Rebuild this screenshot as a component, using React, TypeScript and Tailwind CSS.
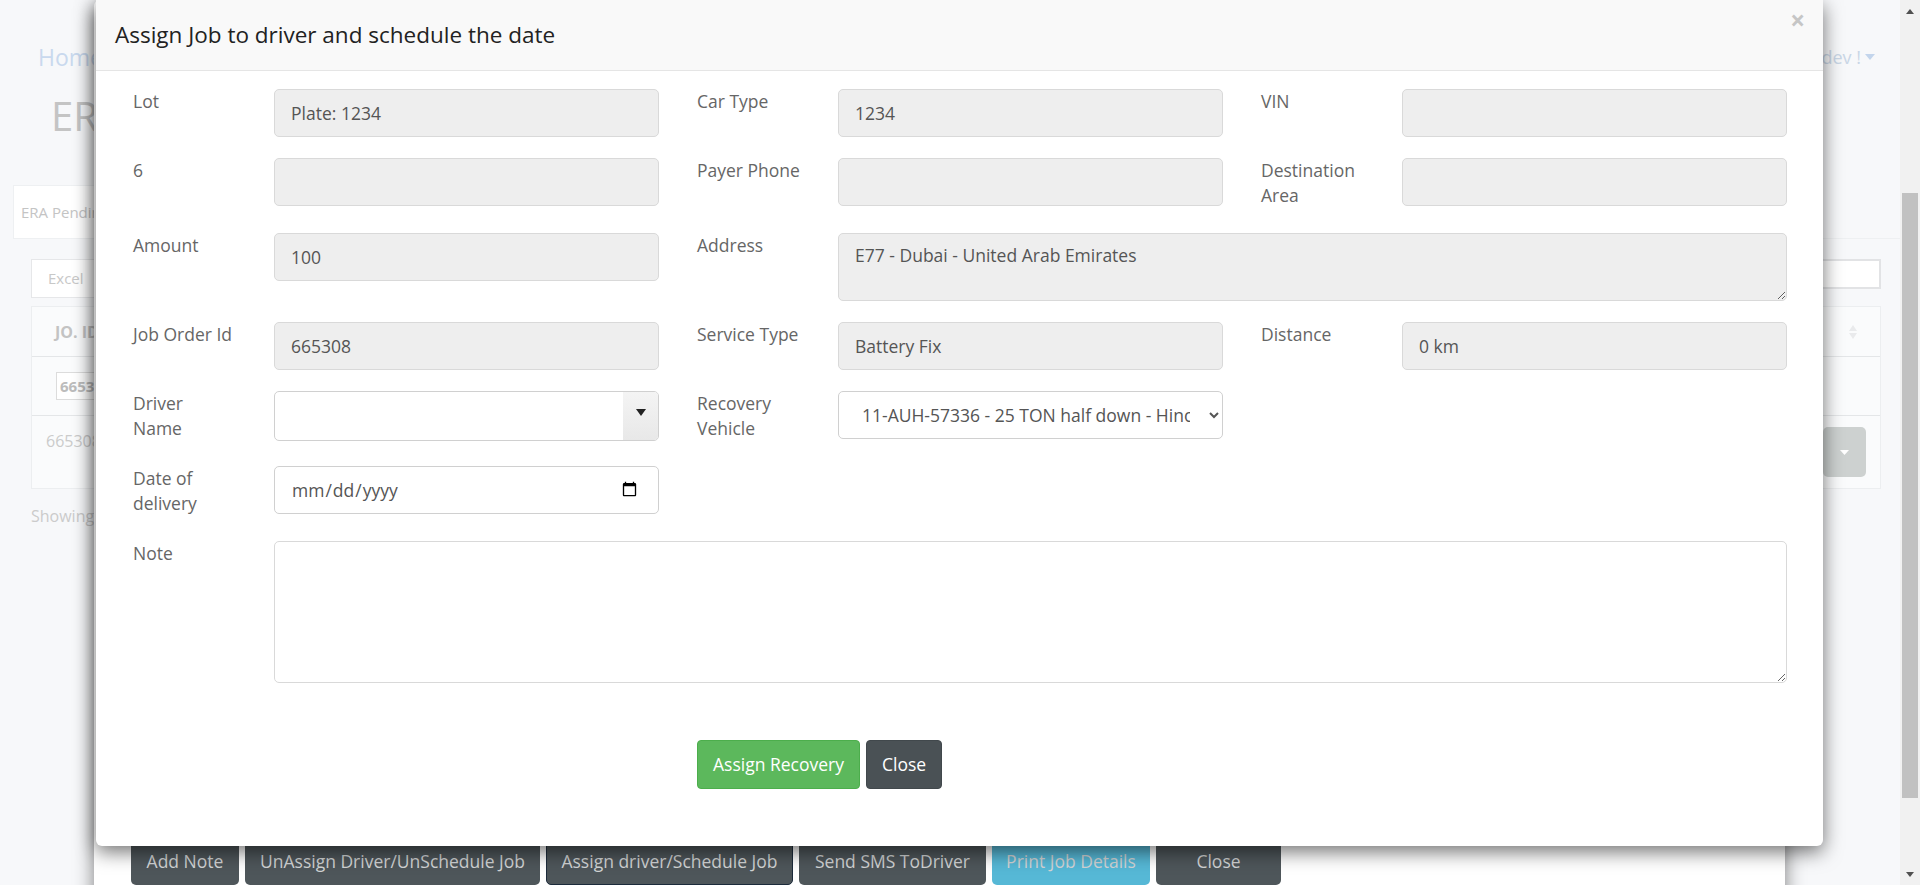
import React from 'react';

const labelCls = 'w-[141px] shrink-0 pr-[30px] pb-1 whitespace-pre-line text-[17.5px] leading-[25px] text-[#666]';
const readCls =
  'block h-[48px] w-full min-w-0 rounded-[5px] border border-[#d9d9d9] bg-[#eee] px-[16px] text-[17.5px] text-[#555] outline-none';

function Field({ label, children, span }: { label: string; children: React.ReactNode; span?: string }) {
  return (
    <div className={`flex items-start ${span ?? ''}`}>
      <div className={labelCls}>{label}</div>
      <div className="min-w-0 flex-1">{children}</div>
    </div>
  );
}

function ReadInput({ value }: { value?: string }) {
  return <input readOnly value={value ?? ''} className={readCls} />;
}

function DriverSelect() {
  return (
    <div className="flex h-[50px] w-full overflow-hidden rounded-[5px] border border-[#d0d0d0] bg-white">
      <div className="flex-1" />
      <div className="flex w-[35px] items-center justify-center bg-gradient-to-b from-[#f4f4f4] to-[#e8e8e8]">
        <svg width="10" height="7" viewBox="0 0 10 7" className="-mt-[8px]">
          <path d="M0 0 H10 L5 7 Z" fill="#222" />
        </svg>
      </div>
    </div>
  );
}

function FrontModal() {
  return (
    <div className="absolute left-[96px] top-0 w-[1727px] rounded-b-[6px] bg-white shadow-[0_6px_19px_rgba(0,0,0,0.55)]">
      <div className="relative flex h-[71px] items-center border-b border-[#e5e5e5] bg-[#f9f9f9] pl-[19px]">
        <h4 className="text-[22.5px] leading-[30px] text-[#222]">Assign Job to driver and schedule the date</h4>
        <button className="absolute right-[18px] top-[5px] text-[26px] font-bold leading-[30px] text-[#c6c6c6]">×</button>
      </div>

      <div className="grid grid-cols-3 gap-x-[38px] gap-y-[21px] pl-[37px] pr-[36px] pt-[18px]">
        <Field label="Lot">
          <ReadInput value="Plate: 1234" />
        </Field>
        <Field label="Car Type">
          <ReadInput value="1234" />
        </Field>
        <Field label="VIN">
          <ReadInput />
        </Field>

        <Field label="6">
          <ReadInput />
        </Field>
        <Field label="Payer Phone">
          <ReadInput />
        </Field>
        <Field label={'Destination\nArea'}>
          <ReadInput />
        </Field>

        <Field label="Amount">
          <ReadInput value="100" />
        </Field>
        <Field label="Address" span="col-span-2">
          <textarea
            readOnly
            value="E77 - Dubai - United Arab Emirates"
            className="block h-[68px] w-full rounded-[5px] border border-[#d9d9d9] bg-[#eee] px-[16px] pt-[9px] text-[17.5px] leading-[25px] text-[#555] outline-none"
          />
        </Field>

        <Field label="Job Order Id">
          <ReadInput value="665308" />
        </Field>
        <Field label="Service Type">
          <ReadInput value="Battery Fix" />
        </Field>
        <Field label="Distance">
          <ReadInput value="0 km" />
        </Field>

        <Field label={'Driver\nName'}>
          <DriverSelect />
        </Field>
        <Field label={'Recovery\nVehicle'}>
          <select className="block h-[48px] w-full rounded-[5px] border border-[#d0d0d0] bg-white pl-[19px] pr-[16px] text-[17.5px] text-[#555] outline-none">
            <option>11-AUH-57336 - 25 TON half down - Hino</option>
          </select>
        </Field>
        <div />

        <Field label={'Date of\ndelivery'}>
          <input
            type="date"
            className="block h-[48px] w-full rounded-[5px] border border-[#d0d0d0] bg-white pl-[16px] pr-[18px] text-[17.5px] text-[#555] outline-none"
          />
        </Field>
        <div />
        <div />

        <Field label="Note" span="col-span-3">
          <textarea className="block h-[142px] w-full rounded-[5px] border border-[#d9d9d9] bg-white px-[16px] py-[10px] text-[17.5px] text-[#555] outline-none" />
        </Field>
      </div>

      <div className="grid grid-cols-3 gap-x-[38px] pb-[57px] pl-[37px] pr-[36px] pt-[57px]">
        <div />
        <div className="flex gap-[6px]">
          <button className="h-[49px] rounded-[4px] border border-[#4cae4c] bg-[#5cb85c] px-[15px] text-[17.5px] text-white">
            Assign Recovery
          </button>
          <button className="h-[49px] rounded-[4px] border border-[#41484c] bg-[#4a5155] px-[15px] text-[17.5px] text-white">
            Close
          </button>
        </div>
      </div>
    </div>
  );
}

function BackModal() {
  const btn = 'h-[48px] rounded-[5px] text-[17.5px] text-[#d2d4d5]';
  return (
    <div className="absolute left-[94px] top-0 flex h-[905px] w-[1691px] flex-col justify-end rounded-[6px] bg-white shadow-[0_6px_19px_rgba(0,0,0,0.5)]">
      <div className="flex gap-[6px] pb-[20px] pl-[37px]">
        <button className={`${btn} w-[108px] bg-[#4e565a]`}>Add Note</button>
        <button className={`${btn} w-[295px] bg-[#4e565a]`}>UnAssign Driver/UnSchedule Job</button>
        <button className={`${btn} w-[247px] border border-[#1c2b3b] bg-[#4e565a]`}>Assign driver/Schedule Job</button>
        <button className={`${btn} w-[187px] bg-[#4e565a]`}>Send SMS ToDriver</button>
        <button className={`${btn} w-[158px] bg-[#56b8d6] text-[#cfe2e9]`}>Print Job Details</button>
        <button className={`${btn} w-[125px] bg-[#4e565a]`}>Close</button>
      </div>
    </div>
  );
}

function Page() {
  return (
    <div className="flex flex-col">
      <div className="flex items-center justify-between pl-[38px] pr-[25px] pt-[42px]">
        <a className="text-[23px] leading-[30px] text-[#c9d9ee]">Home</a>
        <span className="flex items-center gap-[4px] text-[18px] leading-[30px] text-[#c9d6e6]">
          Welcome admindev !
          <svg width="10" height="6" viewBox="0 0 10 6">
            <path d="M0 0 H10 L5 6 Z" fill="#c3d5ec" />
          </svg>
        </span>
      </div>
      <h1 className="mt-[20px] pl-[51px] text-[40px] leading-[48px] text-[#c4c4c4]">ERA</h1>

      <div className="ml-[13px] mt-[45px] flex flex-col">
        <div className="flex h-[54px] border-b border-[#eef0f2]">
          <div className="flex items-center border-x border-t border-[#eef0f2] bg-white px-[7px] text-[15px] text-[#c4c4c4]">
            ERA Pending
          </div>
        </div>
        <div className="flex flex-col pl-[18px] pr-[19px] pt-[20px]">
          <div className="flex items-start justify-between">
            <div className="flex h-[39px] items-center border border-[#e6e7e9] bg-white px-[16px] text-[15px] text-[#c8c8c8]">
              Excel
            </div>
            <div className="flex items-center gap-[6px] text-[15px] text-[#cfcfcf]">
              Search:
              <div className="h-[30px] w-[220px] border-2 border-[#e2e3e5] bg-white" />
            </div>
          </div>
          <div className="mt-[8px] border border-[#eceef0] bg-[#fafbfc]">
            <div className="flex h-[50px] items-center justify-between border-b border-[#e4e6e8] px-[23px] text-[16px] font-bold text-[#c3c3c3]">
              <span>JO. ID</span>
              <svg width="8" height="14" viewBox="0 0 8 14">
                <path d="M0 6 L4 0 L8 6 Z M0 8 L4 14 L8 8 Z" fill="#e9eaec" />
              </svg>
            </div>
            <div className="flex h-[59px] items-center border-b border-[#e4e6e8] px-[24px]">
              <div className="flex h-[28px] w-[120px] items-center border border-[#dcdcdc] bg-white px-[3px] text-[15px] font-bold text-[#bcbcbc]">
                665308
              </div>
            </div>
            <div className="flex h-[72px] items-start justify-between px-[14px] pt-[11px]">
              <span className="pt-[2px] text-[16px] text-[#cbcbcb]">665308</span>
              <div className="flex h-[50px] w-[43px] items-center justify-center rounded-[5px] bg-[#cdd1d0]">
                <svg width="9" height="5" viewBox="0 0 9 5">
                  <path d="M0 0 H9 L4.5 5 Z" fill="#fff" />
                </svg>
              </div>
            </div>
          </div>
          <div className="mt-[15px] text-[16px] leading-[25px] text-[#cbcbcb]">Showing</div>
        </div>
      </div>
    </div>
  );
}

function Scrollbar() {
  return (
    <div className="flex h-full w-[20px] shrink-0 flex-col items-center bg-[#f1f1f1]">
      <div className="flex h-[22px] items-center justify-center">
        <svg width="8" height="5" viewBox="0 0 8 5">
          <path d="M0 5 L4 0 L8 5 Z" fill="#505050" />
        </svg>
      </div>
      <div className="mt-[171px] h-[605px] w-[16px] bg-[#c1c1c1]" />
      <div className="flex-1" />
      <div className="flex h-[22px] items-center justify-center">
        <svg width="8" height="5" viewBox="0 0 8 5">
          <path d="M0 0 H8 L4 5 Z" fill="#505050" />
        </svg>
      </div>
    </div>
  );
}

export default function App() {
  return (
    <div className="flex h-[885px] w-full overflow-hidden bg-[#f7f8fa] font-['Open_Sans','Noto_Sans',Arial,sans-serif]">
      <div className="relative min-w-0 flex-1 overflow-hidden">
        <Page />
        <BackModal />
        <FrontModal />
      </div>
      <Scrollbar />
    </div>
  );
}
